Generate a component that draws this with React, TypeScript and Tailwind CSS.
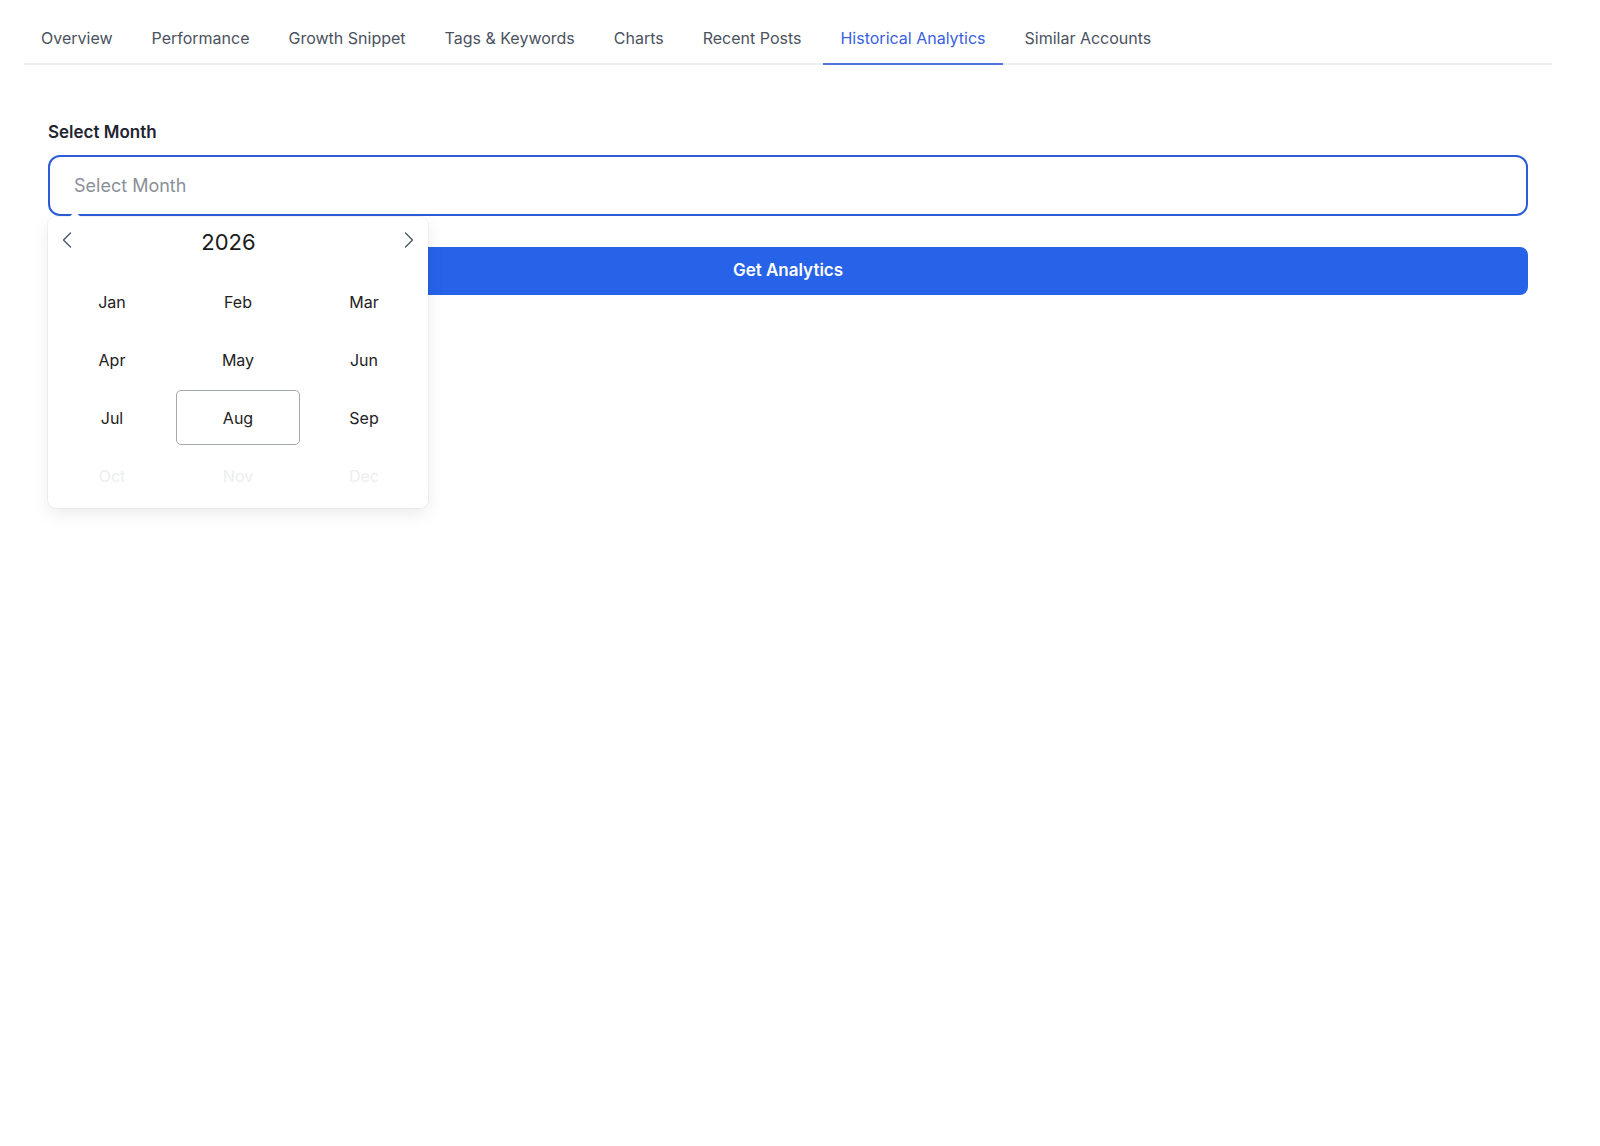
import React from "react";

const tabs = [
  "Overview",
  "Performance",
  "Growth Snippet",
  "Tags & Keywords",
  "Charts",
  "Recent Posts",
  "Historical Analytics",
  "Similar Accounts",
];

const months = ["Jan", "Feb", "Mar", "Apr", "May", "Jun", "Jul", "Aug", "Sep", "Oct", "Nov", "Dec"];

function Chevron({ dir }: { dir: "left" | "right" }) {
  return (
    <svg width="10" height="16" viewBox="0 0 10 16" fill="none">
      <path
        d={dir === "left" ? "M8.5 1 L1.5 8 L8.5 15" : "M1.5 1 L8.5 8 L1.5 15"}
        stroke="#4b5563"
        strokeWidth="1.4"
        strokeLinecap="round"
        strokeLinejoin="round"
      />
    </svg>
  );
}

export default function App() {
  return (
    <div
      className="min-h-[1146px] w-full bg-white"
      style={{ fontFamily: "Inter, 'Noto Sans', sans-serif" }}
    >
      <div className="ml-6 mr-12">
        <nav className="mt-3 flex gap-[5px] border-b-2 border-[#eceef1]">
          {tabs.map((t) => {
            const active = t === "Historical Analytics";
            return (
              <div
                key={t}
                className={
                  active
                    ? "-mb-[2px] flex h-[53px] items-center border-b-2 border-[#5570e0] px-[17px] text-[16px] text-[#3a5fe0]"
                    : "-mb-[2px] flex h-[53px] items-center border-b-2 border-transparent px-[17px] text-[16px] text-[#4b5260]"
                }
              >
                {t}
              </div>
            );
          })}
        </nav>

        <div className="px-6 pt-[55px]">
          <div className="text-[17px] font-semibold leading-6 text-[#1f2530]">Select Month</div>
          <div className="relative mt-[11px]">
            <div className="flex h-[61px] items-center rounded-[12px] border-2 border-[#2d5cd8] bg-white px-6 text-[18px] text-[#8b9098]">
              Select Month
            </div>
            <div className="absolute left-0 top-[calc(100%+1px)] z-10 h-[291px] w-[380px] rounded-[8px] bg-white shadow-[0_0_0_1px_rgba(0,0,0,0.04),0_6px_18px_rgba(0,0,0,0.08)]">
              <div className="absolute -top-[4px] left-[23px] h-[8px] w-[8px] rotate-45 bg-white" />
              <div className="flex h-[50px] items-center px-[14px]">
                <span className="-mt-[4px] flex">
                  <Chevron dir="left" />
                </span>
                <div className="flex-1 pr-[19px] text-center text-[22px] text-[#1a1a1a]">2026</div>
                <span className="-mt-[4px] flex">
                  <Chevron dir="right" />
                </span>
              </div>
              <div className="mt-[7px] grid grid-cols-3 gap-x-[2px] gap-y-[3px] px-[2px]">
                {months.map((m, i) => {
                  const disabled = i >= 9;
                  const selected = m === "Aug";
                  return (
                    <div
                      key={m}
                      className={
                        selected
                          ? "flex h-[55px] items-center justify-center rounded-[5px] border border-[#a3a7ae] text-[16px] text-[#222]"
                          : disabled
                          ? "flex h-[55px] items-center justify-center text-[16px] text-[#eceef0]"
                          : "flex h-[55px] items-center justify-center text-[16px] text-[#222]"
                      }
                    >
                      {m}
                    </div>
                  );
                })}
              </div>
            </div>
          </div>
          <button className="mt-[31px] flex h-[48px] w-full items-center justify-center rounded-[8px] bg-[#2763e9] text-[17px] font-semibold text-white">
            Get Analytics
          </button>
        </div>
      </div>
    </div>
  );
}
